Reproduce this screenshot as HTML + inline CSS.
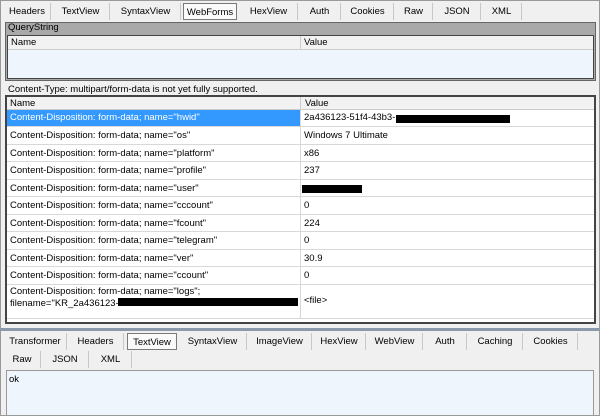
<!DOCTYPE html><html><head><style>
*{margin:0;padding:0;box-sizing:border-box}
body{width:600px;height:416px;background:#f0f0f0;font-family:"Liberation Sans",sans-serif;font-size:9.5px;color:#000;position:relative;overflow:hidden}
.a{position:absolute}
.tab{position:absolute;height:17px;line-height:17px;text-align:center;border-right:1px solid #c8c8c8}
.sel{border:1px solid #7a7a7a;background:#fafafa}
.row{position:absolute;left:7px;width:587px;border-bottom:1px solid #d8d8d8;background:#fff}
.row span{position:absolute;left:3px}
.row b{font-weight:normal;position:absolute;left:297px}
.bl{position:absolute;background:#000}
</style></head><body>
<div class="a" style="left:0;top:0;width:600px;height:416px;border:1px solid #999"></div>
<div class="tab" style="left:4px;top:3px;width:47px">Headers</div>
<div class="tab" style="left:52px;top:3px;width:58px">TextView</div>
<div class="tab" style="left:111px;top:3px;width:70px">SyntaxView</div>
<div class="tab sel" style="left:183px;top:3px;width:54px">WebForms</div>
<div class="tab" style="left:240px;top:3px;width:58px">HexView</div>
<div class="tab" style="left:299px;top:3px;width:42px">Auth</div>
<div class="tab" style="left:342px;top:3px;width:52px">Cookies</div>
<div class="tab" style="left:395px;top:3px;width:38px">Raw</div>
<div class="tab" style="left:434px;top:3px;width:47px">JSON</div>
<div class="tab" style="left:482px;top:3px;width:40px">XML</div>
<div class="a" style="left:5px;top:22px;width:591px;height:59px;background:#a9a9a9;border:1px solid #666"></div>
<div class="a" style="left:8px;top:22px;line-height:11px">QueryString</div>
<div class="a" style="left:7px;top:35px;width:587px;height:44px;background:#eef5fd;border:1px solid #444"></div>
<div class="a" style="left:8px;top:36px;width:585px;height:14px;background:#f2f2f2;border-bottom:1px solid #ccc"></div>
<div class="a" style="left:11px;top:37px">Name</div>
<div class="a" style="left:300px;top:36px;height:14px;border-left:1px solid #ccc;padding-left:3px;line-height:13px">Value</div>
<div class="a" style="left:8px;top:84px">Content-Type: multipart/form-data is not yet fully supported.</div>
<div class="a" style="left:5px;top:95px;width:591px;height:229px;border:2px solid #444;background:#fff"></div>
<div class="a" style="left:7px;top:97px;width:587px;height:13px;background:#f2f2f2;border-bottom:1px solid #ccc"></div>
<div class="a" style="left:10px;top:97px;line-height:13px">Name</div>
<div class="a" style="left:300px;top:97px;line-height:13px;border-left:1px solid #ccc;padding-left:4px">Value</div>
<div class="row" style="top:110px;height:17px;line-height:16px;background:#3399ff;color:#fff"><span>Content-Disposition: form-data; name="hwid"</span><b style="background:#fff;color:#000;left:293px;width:294px;padding-left:4px">2a436123-51f4-43b3-</b></div>
<div class="bl" style="left:396px;top:115px;width:114px;height:8px"></div>
<div class="row" style="top:127px;height:18px;line-height:17px"><span>Content-Disposition: form-data; name="os"</span><b>Windows 7 Ultimate</b></div>
<div class="row" style="top:145px;height:17px;line-height:17px"><span>Content-Disposition: form-data; name="platform"</span><b>x86</b></div>
<div class="row" style="top:162px;height:18px;line-height:17px"><span>Content-Disposition: form-data; name="profile"</span><b>237</b></div>
<div class="row" style="top:180px;height:17px;line-height:17px"><span>Content-Disposition: form-data; name="user"</span></div>
<div class="bl" style="left:302px;top:185px;width:60px;height:8px"></div>
<div class="row" style="top:197px;height:18px;line-height:17px"><span>Content-Disposition: form-data; name="cccount"</span><b>0</b></div>
<div class="row" style="top:215px;height:17px;line-height:17px"><span>Content-Disposition: form-data; name="fcount"</span><b>224</b></div>
<div class="row" style="top:232px;height:18px;line-height:17px"><span>Content-Disposition: form-data; name="telegram"</span><b>0</b></div>
<div class="row" style="top:250px;height:17px;line-height:17px"><span>Content-Disposition: form-data; name="ver"</span><b>30.9</b></div>
<div class="row" style="top:267px;height:18px;line-height:17px"><span>Content-Disposition: form-data; name="ccount"</span><b>0</b></div>
<div class="row" style="top:285px;height:34px;line-height:12px"><span style="top:1px">Content-Disposition: form-data; name="logs";<br>filename="KR_2a436123-51</span><b style="top:10px">&lt;file&gt;</b></div>
<div class="bl" style="left:118px;top:298px;width:180px;height:8px"></div>
<div class="a" style="left:300px;top:110px;height:209px;border-left:1px solid #d8d8d8"></div>
<div class="a" style="left:0;top:328px;width:600px;height:3px;background:#8a9aaa"></div>
<div class="tab" style="left:4px;top:333px;width:63px">Transformer</div>
<div class="tab" style="left:68px;top:333px;width:56px">Headers</div>
<div class="tab sel" style="left:127px;top:333px;width:50px">TextView</div>
<div class="tab" style="left:179px;top:333px;width:68px">SyntaxView</div>
<div class="tab" style="left:248px;top:333px;width:64px">ImageView</div>
<div class="tab" style="left:313px;top:333px;width:53px">HexView</div>
<div class="tab" style="left:367px;top:333px;width:56px">WebView</div>
<div class="tab" style="left:424px;top:333px;width:43px">Auth</div>
<div class="tab" style="left:468px;top:333px;width:55px">Caching</div>
<div class="tab" style="left:524px;top:333px;width:54px">Cookies</div>
<div class="tab" style="left:4px;top:351px;width:37px">Raw</div>
<div class="tab" style="left:42px;top:351px;width:47px">JSON</div>
<div class="tab" style="left:90px;top:351px;width:42px">XML</div>
<div class="a" style="left:6px;top:370px;width:588px;height:46px;background:#eef5fd;border:1px solid #999;padding:3px 2px">ok</div>
</body></html>
